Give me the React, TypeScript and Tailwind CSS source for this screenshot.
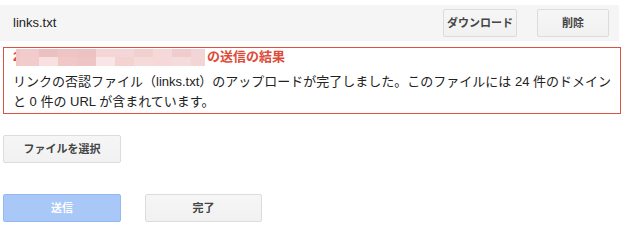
import React from 'react';

const FONT = '[font-family:"Liberation_Sans","Noto_Sans_CJK_JP",sans-serif]';

// pixelated (redacted) part of the title, two rows of cells
const MOSAIC_TOP = ['#f0c6c6', '#f2cccc', '#ecc0c0', '#efc4c4', '#ecc2c2', '#f5d5d5', '#f5d6d8', '#f2d0d0', '#f5d8d8', '#f0cccc', '#f2d5d8'];
const MOSAIC_BOTTOM = ['#f0c8c8', '#f2cccc', '#f8e0e0', '#f0c8c8', '#eec4c4', '#f8e5e5', '#f5d2d2', '#f5dada', '#f6d8d8', '#f5dcdc', '#f3d5d5'];
const CELL_W = [4, 19, 19, 19, 19, 19, 19, 19, 19, 19, 14];

const Mosaic: React.FC = () => (
  <span className="inline-flex flex-col h-[17px] w-[189px]">
    {[MOSAIC_TOP, MOSAIC_BOTTOM].map((row, r) => (
      <span key={r} className="flex h-1/2">
        {row.map((c, i) => (
          <span key={i} className="h-full" style={{ width: CELL_W[i], background: c }} />
        ))}
      </span>
    ))}
  </span>
);

const GrayButton: React.FC<{ label: string; className?: string }> = ({ label, className = '' }) => (
  <button
    className={`h-[28px] rounded-[2px] border border-[#dcdcdc] bg-gradient-to-b from-[#f6f6f6] to-[#f1f1f1] text-[11px] font-bold text-[#444] ${className}`}
  >
    {label}
  </button>
);

export default function App() {
  return (
    <div className={`w-[627px] h-[246px] bg-white pt-[5px] ${FONT}`}>
      {/* file row */}
      <div className="w-[619px] h-[36px] bg-[#f5f5f5] flex items-center pl-[13px] pr-[10px]">
        <span className="text-[13px] text-[#222]">links.txt</span>
        <div className="ml-auto flex gap-[20px]">
          <GrayButton label="ダウンロード" className="w-[74px]" />
          <GrayButton label="削除" className="w-[72px]" />
        </div>
      </div>

      {/* result box */}
      <div className="mt-[6px] ml-[3px] w-[618px] border border-[#d9533f] pl-[9px] pr-[8px] pb-px">
        <div className="flex items-center h-[18px] text-[13px] font-bold text-[#dd4b39]">
          <span className="w-[3px] overflow-hidden">2</span>
          <Mosaic />
          <span className="ml-[2px]">の送信の結果</span>
        </div>
        <p className="mt-[6px] text-[13px] leading-[20px] text-[#222]">
          リンクの否認ファイル（links.txt）のアップロードが完了しました。このファイルには 24 件のドメインと 0 件の URL が含まれています。
        </p>
      </div>

      <div className="ml-[3px] mt-[21px]">
        <GrayButton label="ファイルを選択" className="w-[118px]" />
      </div>

      <div className="ml-[3px] mt-[31px] flex gap-[24px]">
        <button className="w-[118px] h-[28px] rounded-[2px] border border-[#93b9f5] bg-[#a9c8f8] text-[11px] font-bold text-white">
          送信
        </button>
        <GrayButton label="完了" className="w-[117px]" />
      </div>
    </div>
  );
}
